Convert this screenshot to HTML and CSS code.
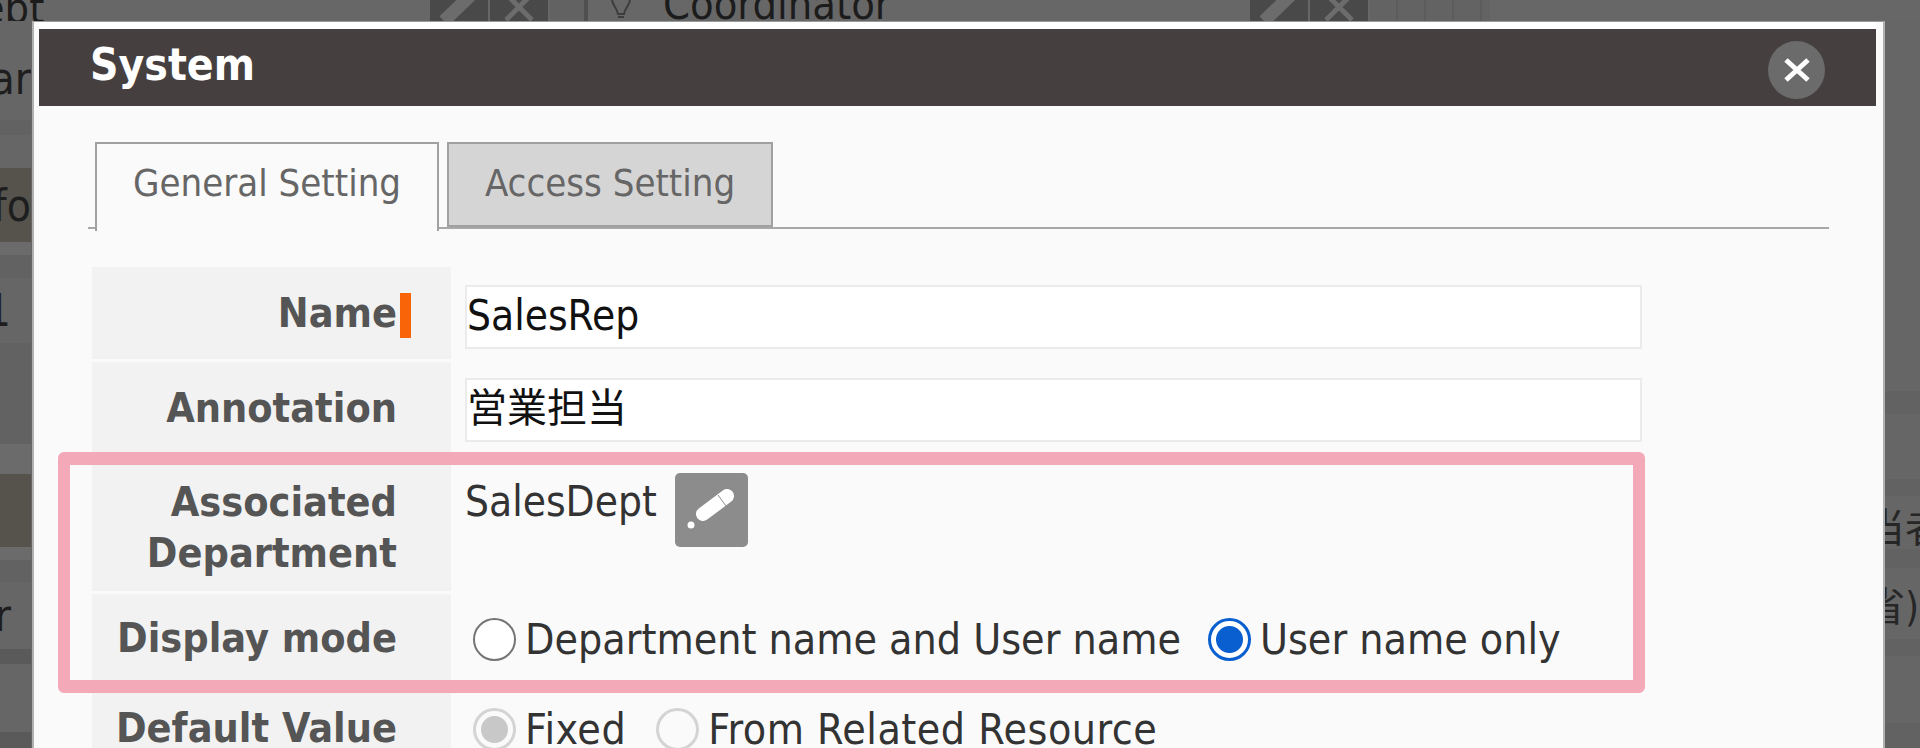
FILE: index.html
```html
<!DOCTYPE html>
<html lang="en">
<head>
    <meta charset="UTF-8">
    <title>System - Role Setting</title>
    <link rel="stylesheet" href="styles.css">
</head>
<body>

<div class="page">

    <!-- page behind the dialog, dimmed -->
    <div class="top-strip">
        <span class="top-text first">SalesDept</span>
        <span class="row-button">
            <svg width="58" height="21" viewBox="0 0 58 21"><path d="M14 21 L42 -6" class="row-icon"/></svg>
        </span>
        <span class="row-button">
            <svg width="58" height="21" viewBox="0 0 58 21"><path d="M16 -6 L42 20 M42 -6 L16 20" class="row-icon thin"/></svg>
        </span>
        <span class="row-spacer"></span>
        <span class="row-bulb">
            <svg width="24" height="18" viewBox="0 0 24 18"><path d="M3 0 C4 6 8 8 9 14 L15 14 C16 8 20 6 21 0 M9 17 L15 17" fill="none" stroke="#3d3d3d" stroke-width="2"/></svg>
        </span>
        <span class="top-text second">Coordinator</span>
        <span class="row-button second-set">
            <svg width="58" height="21" viewBox="0 0 58 21"><path d="M14 21 L42 -6" class="row-icon"/></svg>
        </span>
        <span class="row-button">
            <svg width="58" height="21" viewBox="0 0 58 21"><path d="M16 -6 L42 20 M42 -6 L16 20" class="row-icon thin"/></svg>
        </span>
        <span class="row-ticks"></span>
    </div>

    <div class="side-strip left">
        <div class="band h16"></div>
        <div class="band h83 text-ar">ar</div>
        <div class="band h15 dim"></div>
        <div class="band h33"></div>
        <div class="band h74 olive text-fo">fo</div>
        <div class="band h13 pale"></div>
        <div class="band h23 dim"></div>
        <div class="band h65"><span class="text-one">1</span></div>
        <div class="band h101 dim"></div>
        <div class="band h30 pale"></div>
        <div class="band h73 olive"></div>
        <div class="band h13 pale"></div>
        <div class="band h22 dim"></div>
        <div class="band h67"><span class="text-r">r</span></div>
        <div class="band h15 dark"></div>
        <div class="band h68"></div>
        <div class="band h16 dark"></div>
    </div>

    <!-- dialog -->
    <div class="modal">
        <div class="modal-title">
            <h1>System</h1>
            <button class="close-button">
                <svg width="28" height="28" viewBox="0 0 28 28"><path d="M3 4 L25 24 M25 4 L3 24" stroke="#fff" stroke-width="5"/></svg>
            </button>
        </div>

        <div class="modal-body">
            <ul class="tabs">
                <li class="tab active">General Setting</li>
                <li class="tab">Access Setting</li>
            </ul>

            <table class="form-table">
                <tr class="row-input">
                    <th>Name<span class="required"></span></th>
                    <td><input type="text" class="input-field" value="SalesRep"></td>
                </tr>
                <tr class="row-input annotation">
                    <th>Annotation</th>
                    <td><input type="text" class="input-field cjk" value="営業担当"></td>
                </tr>
                <tr class="row-dept">
                    <th>Associated<br>Department</th>
                    <td>
                        <div class="dept-value">
                            <span>SalesDept</span>
                            <button class="edit-button">
                                <svg width="73" height="74" viewBox="0 0 73 74">
                                    <circle cx="16" cy="52" r="3.5" fill="#fff"/>
                                    <path d="M28 41 L52 23" stroke="#fff" stroke-width="14" stroke-linecap="round"/>
                                    <path d="M43 22 L51 33" stroke="#8c8c8c" stroke-width="1"/>
                                </svg>
                            </button>
                        </div>
                    </td>
                </tr>
                <tr class="row-radio">
                    <th>Display mode</th>
                    <td>
                        <div class="radio-group">
                            <label class="radio-label gap-dept"><input type="radio" name="mode">Department name and User name</label>
                            <label class="radio-label"><input type="radio" name="mode" checked>User name only</label>
                        </div>
                    </td>
                </tr>
                <tr class="row-radio last">
                    <th>Default Value</th>
                    <td>
                        <div class="radio-group">
                            <label class="radio-label gap-fixed"><input type="radio" name="def" checked disabled>Fixed</label>
                            <label class="radio-label"><input type="radio" name="def" disabled>From Related Resource</label>
                        </div>
                    </td>
                </tr>
            </table>
        </div>

        <div class="highlight"></div>
    </div>

    <div class="side-strip right">
        <div class="band h370"></div>
        <div class="band h23 dim"></div>
        <div class="band h65"></div>
        <div class="band h17 dim"></div>
        <div class="band h53 text-cjk">当者</div>
        <div class="band h19 dim"></div>
        <div class="band h71 text-cjk lower">省)</div>
        <div class="band h17 dim"></div>
        <div class="band h67"></div>
        <div class="band h25 dim"></div>
    </div>

</div>

</body>
</html>
```

FILE: styles.css
```css
body {
    margin: 0;
    padding: 0;
    overflow: hidden;
    font-family: "DejaVu Sans", "Noto Sans CJK JP", sans-serif;
    font-stretch: condensed;
    background-color: #666666;
}

.page {
    display: grid;
    grid-template-columns: 32px 1853px 35px;
    grid-template-rows: 21px 727px;
    width: 1920px;
    height: 748px;
    overflow: hidden;
}

/* dimmed page behind the dialog */
.top-strip {
    grid-column: 1 / 4;
    display: flex;
    align-items: stretch;
    height: 21px;
    overflow: hidden;
    background-color: #676767;
}

.top-text {
    font-size: 43px;
    color: #1c1c1c;
    white-space: nowrap;
}

.top-text.first {
    flex: 0 0 auto;
    width: 582px;
    margin-left: -152px;
    padding-top: 8px;
    line-height: 0;
    box-sizing: border-box;
}

.top-text.second {
    width: 587px;
    margin-top: 4px;
    line-height: 0;
}

.row-button {
    display: block;
    width: 58px;
    margin-right: 2px;
    background-color: #494949;
}

.row-button svg {
    display: block;
}

.row-icon {
    fill: none;
    stroke: #6c6c6c;
    stroke-width: 13;
}

.row-icon.thin {
    stroke-width: 5;
}

.row-spacer {
    width: 34px;
    border-right: 4px solid #4f4f4f;
    background-color: #626262;
}

.row-bulb {
    width: 75px;
    padding-left: 21px;
    box-sizing: border-box;
}

.row-ticks {
    width: 120px;
    background: repeating-linear-gradient(90deg, #636363 0, #636363 26px, #5c5c5c 26px, #5c5c5c 28px);
}

.side-strip {
    display: flex;
    flex-direction: column;
    overflow: hidden;
}

.side-strip.left {
    margin-right: 1px;
}

.band {
    display: flex;
    justify-content: flex-end;
    align-items: center;
    flex: 0 0 auto;
    background-color: #666666;
    font-size: 44px;
    color: #1e1e1e;
    white-space: nowrap;
}

.side-strip.right .band {
    justify-content: flex-start;
}

.text-one {
    margin-right: 20px;
}

.text-r {
    margin-right: 20px;
}

.dim { background-color: #626262; }
.dark { background-color: #5a5a5a; }
.pale { background-color: #6b6b6b; }
.olive { background-color: #55534c; }

.h13 { height: 13px; }
.h15 { height: 15px; }
.h16 { height: 16px; }
.h17 { height: 17px; }
.h19 { height: 19px; }
.h22 { height: 22px; }
.h23 { height: 23px; }
.h25 { height: 25px; }
.h30 { height: 30px; }
.h33 { height: 33px; }
.h53 { height: 53px; }
.h65 { height: 65px; }
.h67 { height: 67px; }
.h68 { height: 68px; }
.h71 { height: 71px; }
.h73 { height: 73px; }
.h74 { height: 74px; }
.h83 { height: 83px; }
.h101 { height: 101px; }
.h370 { height: 370px; }

.text-cjk {
    font-size: 40px;
    text-indent: -20px;
    color: #262626;
    padding-top: 4px;
    box-sizing: border-box;
}

.text-cjk.lower {
    text-indent: -20px;
    padding-top: 0;
}

/* dialog */
.modal {
    position: relative;
    height: 727px;
    overflow: hidden;
    box-sizing: border-box;
    background-color: #fafafa;
    border-top: 1px solid #9a9a9a;
    border-left: 2px solid #b0b0b0;
    border-right: 2px solid #b0b0b0;
}

.modal-title {
    display: flex;
    justify-content: space-between;
    align-items: center;
    height: 77px;
    margin: 7px 7px 0 5px;
    padding: 0 51px 0 51px;
    box-sizing: border-box;
    background-color: #453f3f;
    box-shadow: 0 -7px 0 #ffffff;
}

.modal-title h1 {
    margin: 0 0 7px 0;
    font-size: 44px;
    font-weight: bold;
    color: #ffffff;
}

.close-button {
    display: flex;
    align-items: center;
    justify-content: center;
    width: 57px;
    height: 58px;
    margin-top: 5px;
    padding: 0;
    border: none;
    border-radius: 50%;
    background-color: #6b6b6b;
}

.modal-body {
    padding: 36px 54px 0 54px;
}

.tabs {
    display: flex;
    gap: 8px;
    height: 85px;
    margin: 0;
    padding: 0 0 0 7px;
    list-style: none;
    border-bottom: 2px solid #a8a8a8;
}

.tab {
    width: 326px;
    height: 85px;
    padding-top: 17px;
    box-sizing: border-box;
    text-align: center;
    font-size: 38px;
    color: #666666;
    background-color: #d6d5d5;
    border: 2px solid #a0a0a0;
}

.tab.active {
    width: 344px;
    height: 89px;
    background-color: #fafafa;
    border-bottom: none;
}

.form-table {
    margin: 35px 0 0 4px;
    border-collapse: separate;
    border-spacing: 0 3px;
    table-layout: fixed;
    width: 1560px;
}

.form-table th {
    width: 305px;
    padding: 0 54px 0 0;
    text-align: right;
    font-size: 41px;
    line-height: 51px;
    font-weight: bold;
    color: #555555;
    background-color: #f2f2f2;
}

.form-table td {
    padding: 0 0 0 14px;
    font-size: 42.5px;
    color: #333333;
}

.row-input th,
.row-input td {
    height: 92px;
}

.row-input td {
    padding-top: 8px;
    box-sizing: border-box;
}

.form-table .annotation td {
    padding-top: 4px;
}

.row-dept th,
.row-dept td {
    height: 134px;
}

.row-dept th {
    padding-top: 8px;
    box-sizing: border-box;
}

.row-dept td {
    vertical-align: top;
}

.row-radio th,
.row-radio td {
    height: 91px;
}

.row-radio th {
    padding-bottom: 2px;
    box-sizing: border-box;
}

.row-radio.last th,
.row-radio.last td {
    height: 82px;
}

.row-radio.last td {
    letter-spacing: 0.5px;
}

.required {
    display: inline-block;
    width: 11px;
    height: 45px;
    margin: 0 -14px 0 3px;
    vertical-align: middle;
    background-color: #f96408;
}

.input-field {
    display: block;
    width: 1177px;
    height: 64px;
    padding: 0 0 4px 0;
    box-sizing: border-box;
    font-family: inherit;
    font-stretch: condensed;
    font-size: 42px;
    color: #111111;
    background-color: #ffffff;
    border: 2px solid #ebebeb;
}

.input-field.cjk {
    padding-bottom: 11px;
    font-family: "Noto Sans CJK JP", sans-serif;
    font-size: 40px;
}

.dept-value {
    display: flex;
    align-items: flex-start;
    gap: 18px;
    padding-top: 16px;
    font-size: 42px;
    line-height: 57px;
}

.edit-button {
    display: block;
    width: 73px;
    height: 74px;
    padding: 0;
    border: none;
    border-radius: 5px;
    background-color: #8c8c8c;
}

.edit-button svg {
    display: block;
}

.radio-group {
    display: flex;
    align-items: center;
    padding-left: 8px;
}

.radio-label {
    display: flex;
    align-items: center;
    gap: 9px;
    white-space: nowrap;
}

.gap-dept { margin-right: 27px; }
.gap-fixed { margin-right: 30px; }

.radio-label input {
    appearance: none;
    width: 43px;
    height: 43px;
    margin: 0;
    flex: 0 0 auto;
    box-sizing: border-box;
    border: 2px solid #757575;
    border-radius: 50%;
    background-color: #ffffff;
}

.radio-label input:checked {
    border: 3px solid #0a5fd0;
    background: radial-gradient(circle, #0a5fd0 0, #0a5fd0 13px, #ffffff 14px);
}

.radio-label input:disabled {
    border: 3px solid #d4d4d4;
    background: #fafafa;
}

.radio-label input:disabled:checked {
    background: radial-gradient(circle, #c8c8c8 0, #c8c8c8 13px, #fafafa 14px);
}

/* annotation drawn over the form */
.highlight {
    position: absolute;
    left: 24px;
    top: 430px;
    width: 1587px;
    height: 241px;
    box-sizing: border-box;
    border: 12px solid #f4a9b8;
    border-width: 13px 12px;
    border-radius: 6px;
}
```
